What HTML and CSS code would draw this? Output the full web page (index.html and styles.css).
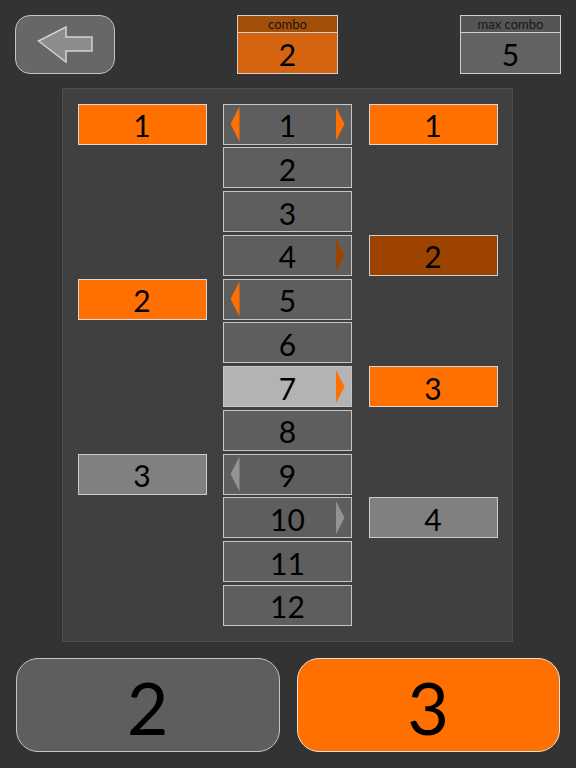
FILE: index.html
```html
<!DOCTYPE html>
<html>
<head>
<meta charset="utf-8">
<link rel="stylesheet" href="styles.css">
</head>
<body>
<div class="top">
  <div class="back">
    <svg width="100" height="59" viewBox="0 0 100 59">
      <path d="M23.5 26 L51 12 L51 22 L77 22 L77 36 L51 36 L51 47 Z" fill="#8c8c8c" stroke="#d2d2d2" stroke-width="1.5" stroke-linejoin="miter"/>
    </svg>
  </div>
  <div class="stat orange">
    <div class="stat-head">combo</div>
    <div class="stat-val">2</div>
  </div>
  <div class="stat gray">
    <div class="stat-head">max combo</div>
    <div class="stat-val">5</div>
  </div>
</div>

<div class="panel">
  <div class="grid">
    <div class="side s-orange r1 c1">1</div>
    <div class="side s-orange r5 c1">2</div>
    <div class="side s-gray r9 c1">3</div>

    <div class="mid r1"><span class="tri l t-orange"></span>1<span class="tri r t-orange"></span></div>
    <div class="mid r2">2</div>
    <div class="mid r3">3</div>
    <div class="mid r4">4<span class="tri r t-dark"></span></div>
    <div class="mid r5"><span class="tri l t-orange"></span>5</div>
    <div class="mid r6">6</div>
    <div class="mid light r7">7<span class="tri r t-orange"></span></div>
    <div class="mid r8">8</div>
    <div class="mid r9"><span class="tri l t-gray"></span>9</div>
    <div class="mid r10">10<span class="tri r t-gray"></span></div>
    <div class="mid r11">11</div>
    <div class="mid r12">12</div>

    <div class="side s-orange r1 c3">1</div>
    <div class="side s-dark r4 c3">2</div>
    <div class="side s-orange r7 c3">3</div>
    <div class="side s-gray r10 c3">4</div>
  </div>
</div>

<div class="bottom">
  <div class="big b-gray">2</div>
  <div class="big b-orange">3</div>
</div>
</body>
</html>
```
FILE: styles.css
```css
html, body {
  margin: 0;
  padding: 0;
  background: #333333;
  font-family: Lato, "Open Sans", sans-serif;
  color: #000;
}
body {
  width: 576px;
  height: 768px;
  overflow: hidden;
}
.top {
  display: flex;
  justify-content: space-between;
  padding: 15px 15px 0 15px;
  height: 59px;
}
.back {
  width: 100px;
  height: 59px;
  box-sizing: border-box;
  border: 1.5px solid #c4c4c4;
  border-radius: 15px;
  background: #676767;
  position: relative;
  overflow: hidden;
}
.back svg {
  position: absolute;
  left: -1.5px;
  top: -1.5px;
}
.stat {
  width: 101px;
  height: 59px;
  box-sizing: border-box;
  border: 1.5px solid #cfcfcf;
  display: flex;
  flex-direction: column;
}
.stat-head {
  height: 16px;
  border-bottom: 1.5px solid #cfcfcf;
  font-size: 13px;
  line-height: 16px;
  text-align: center;
  color: #151515;
}
.stat-val {
  flex: 1;
  display: flex;
  align-items: center;
  justify-content: center;
  font-size: 30px;
  padding-top: 1px;
}
.orange .stat-head { background: #a34f0c; }
.orange .stat-val { background: #d4640f; }
.gray .stat-head { background: #555555; }
.gray .stat-val { background: #626262; }

.panel {
  margin: 14px 0 0 62px;
  width: 451px;
  height: 554px;
  box-sizing: border-box;
  border: 1.5px solid #4d4d4d;
  background: #404040;
  padding: 14.5px 0 0 0;
}
.grid {
  display: grid;
  grid-template-columns: 129px 129px 129px;
  column-gap: 16.5px;
  grid-template-rows: repeat(12, 41px);
  row-gap: 2.75px;
  justify-content: center;
}
.side, .mid {
  box-sizing: border-box;
  border: 1.5px solid #c6c6c6;
  display: flex;
  align-items: center;
  justify-content: center;
  font-size: 30px;
  line-height: 1;
  padding-top: 2px;
  position: relative;
}
.mid { grid-column: 2; background: #5e5e5e; }
.mid.light { background: #b3b3b3; }
.c1 { grid-column: 1; }
.c3 { grid-column: 3; }
.r1 { grid-row: 1; }
.r2 { grid-row: 2; }
.r3 { grid-row: 3; }
.r4 { grid-row: 4; }
.r5 { grid-row: 5; }
.r6 { grid-row: 6; }
.r7 { grid-row: 7; }
.r8 { grid-row: 8; }
.r9 { grid-row: 9; }
.r10 { grid-row: 10; }
.r11 { grid-row: 11; }
.r12 { grid-row: 12; }
.s-orange { background: #ff7000; border-color: #d9d9d9; }
.s-dark { background: #9c4300; border-color: #d0d0d0; }
.s-gray { background: #808080; border-color: #cccccc; }

.tri {
  position: absolute;
  top: 2px;
  width: 9px;
  height: 35px;
}
.tri.l {
  left: 6.5px;
  clip-path: polygon(100% 0, 0 50%, 100% 100%);
}
.tri.r {
  right: 6.5px;
  clip-path: polygon(0 0, 100% 50%, 0 100%);
}
.t-orange { background: #ff7000; }
.t-dark { background: #9c4300; }
.t-gray { background: #939393; }

.bottom {
  display: flex;
  gap: 17px;
  padding: 0 16px;
  margin-top: 16px;
}
.big {
  flex: 1;
  height: 94px;
  box-sizing: border-box;
  border-radius: 22px;
  display: flex;
  align-items: center;
  justify-content: center;
  font-size: 72px;
  line-height: 1;
  padding-top: 4px;
}
.b-gray { background: #5e5e5e; border: 1.5px solid #c4c4c4; }
.b-orange { background: #ff7000; border: 1.5px solid #e2e2e2; }
```
